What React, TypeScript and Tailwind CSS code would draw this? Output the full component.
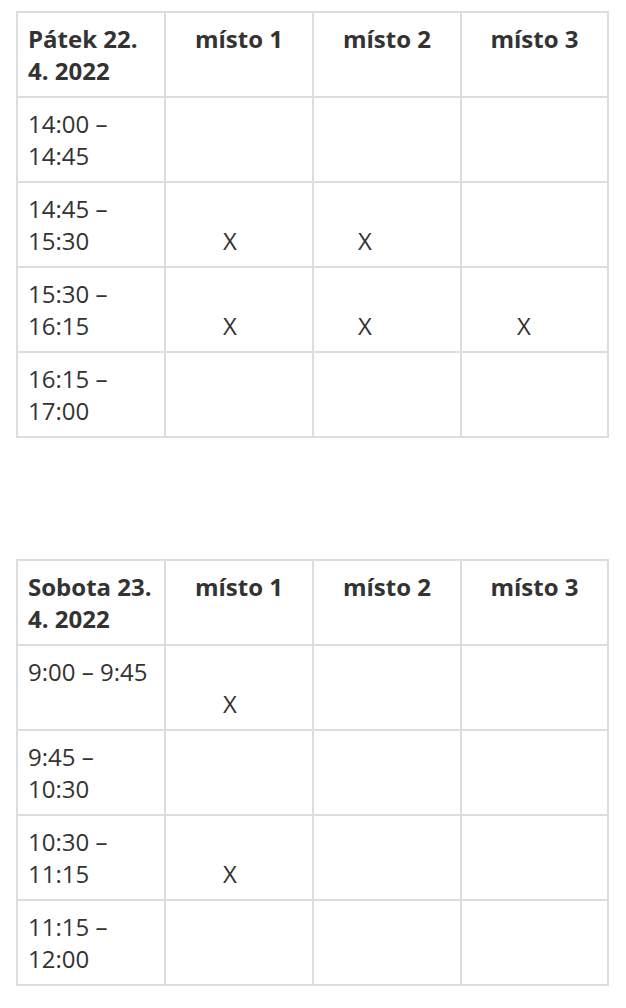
import React from "react";

type Row = { time: string; marks: (number | null)[] };

const cellBase =
  "border-2 border-[#dddddd] align-top px-[10px] pt-[10px] pb-[9px] text-[24px] leading-[32px]";

function Mark({ offset }: { offset: number | null }) {
  if (offset === null) return null;
  return (
    <div>
      <div>&nbsp;</div>
      <div style={{ paddingLeft: offset }}>X</div>
    </div>
  );
}

function Schedule({ title, rows }: { title: string; rows: Row[] }) {
  return (
    <table className="table-fixed border-collapse w-[591px] text-[#333333]">
      <colgroup>
        <col className="w-[148px]" />
        <col className="w-[148px]" />
        <col className="w-[148px]" />
        <col className="w-[147px]" />
      </colgroup>
      <thead>
        <tr>
          <th className={`${cellBase} text-left font-bold`}>{title}</th>
          <th className={`${cellBase} text-center font-bold`}>místo 1</th>
          <th className={`${cellBase} text-center font-bold`}>místo 2</th>
          <th className={`${cellBase} text-center font-bold`}>místo 3</th>
        </tr>
      </thead>
      <tbody>
        {rows.map((r) => (
          <tr key={r.time}>
            <td className={`${cellBase} text-left`}>{r.time}</td>
            {r.marks.map((m, i) => (
              <td key={i} className={`${cellBase} text-left`}>
                <Mark offset={m} />
              </td>
            ))}
          </tr>
        ))}
      </tbody>
    </table>
  );
}

export default function App() {
  const day1: Row[] = [
    { time: "14:00 – 14:45", marks: [null, null, null] },
    { time: "14:45 – 15:30", marks: [47, 34, null] },
    { time: "15:30 – 16:15", marks: [47, 34, 45] },
    { time: "16:15 – 17:00", marks: [null, null, null] },
  ];
  const day2: Row[] = [
    { time: "9:00 – 9:45", marks: [47, null, null] },
    { time: "9:45 – 10:30", marks: [null, null, null] },
    { time: "10:30 – 11:15", marks: [47, null, null] },
    { time: "11:15 – 12:00", marks: [null, null, null] },
  ];
  return (
    <div
      className="min-h-[1008px] bg-white pl-[16px] pt-[11px]"
      style={{ fontFamily: '"Open Sans", sans-serif' }}
    >
      <Schedule title="Pátek 22. 4. 2022" rows={day1} />
      <div className="h-[121px]" />
      <Schedule title="Sobota 23. 4. 2022" rows={day2} />
    </div>
  );
}
